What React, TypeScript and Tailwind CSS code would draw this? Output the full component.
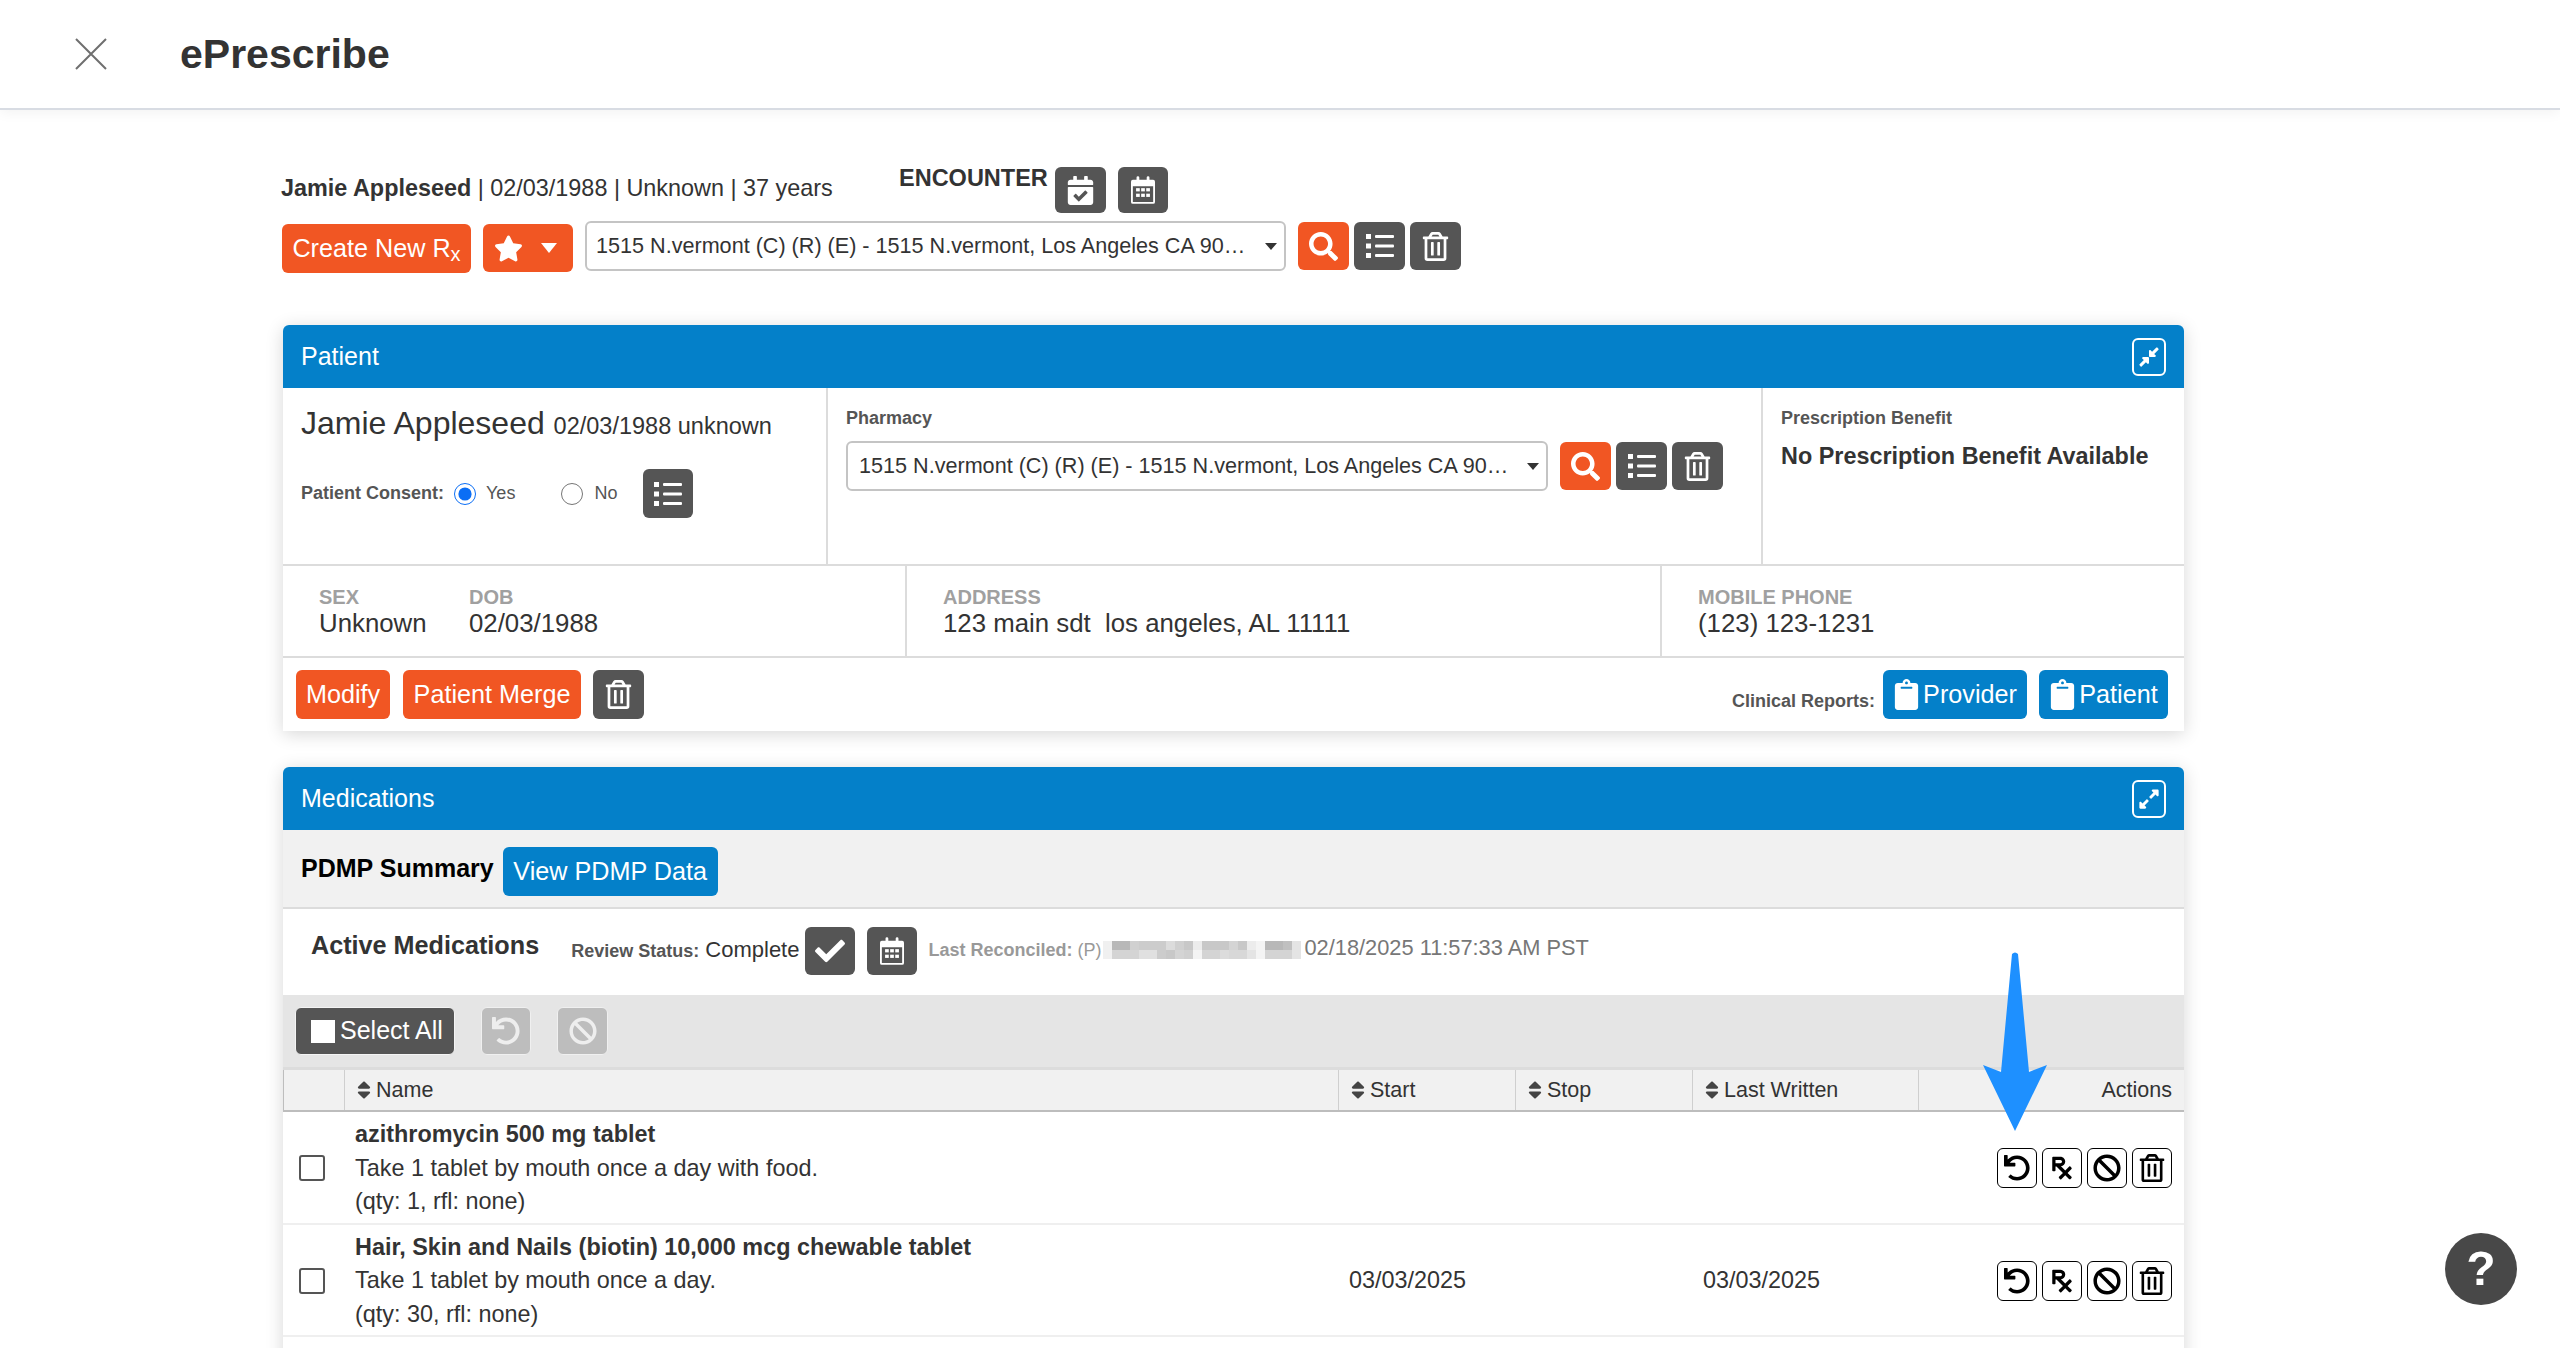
import { ReactNode } from "react";
import {
  FaBan,
  FaCalendarCheck,
  FaCheck,
  FaClipboard,
  FaCompressAlt,
  FaExpandAlt,
  FaPrescription,
  FaRegTrashAlt,
  FaSearch,
  FaSort,
  FaStar,
  FaUndo,
} from "react-icons/fa";

const pharmacy = "1515 N.vermont (C) (R) (E) - 1515 N.vermont, Los Angeles CA 90…";

const blurTop = ["#f0f0f0", "#b8b8b8", "#b8b8b8", "#d0d0d0", "#cccccc", "#cccccc", "#cccccc", "#dcdcdc", "#d0d0d0", "#c8c8c8", "#ececec", "#c8c8c8", "#c8c8c8", "#c8c8c8", "#d4d4d4", "#c8c8c8", "#ececec", "#f4f4f4", "#b8b8b8", "#b8b8b8", "#c0c0c0", "#e4e4e4"];
const blurBottom = ["#f0f0f0", "#d4d4d4", "#d4d4d4", "#d4d4d4", "#e0e0e0", "#e0e0e0", "#cccccc", "#c8c8c8", "#d4d4d4", "#d0d0d0", "#f4f4f4", "#d4d4d4", "#d4d4d4", "#dcdcdc", "#d8d8d8", "#d8d8d8", "#e4e4e4", "#f4f4f4", "#d4d4d4", "#d4d4d4", "#d4d4d4", "#e4e4e4"];

const meds = [
  { name: "azithromycin 500 mg tablet", sig: "Take 1 tablet by mouth once a day with food.", qty: "(qty: 1, rfl: none)", start: "", written: "" },
  { name: "Hair, Skin and Nails (biotin) 10,000 mcg chewable tablet", sig: "Take 1 tablet by mouth once a day.", qty: "(qty: 30, rfl: none)", start: "03/03/2025", written: "03/03/2025" },
];

function ListIcon({ size = 28 }: { size?: number }) {
  return (
    <svg width={size} height={size} viewBox="0 0 28 28" fill="white">
      <rect x="0" y="2" width="5" height="5" />
      <rect x="0" y="11.5" width="5" height="5" />
      <rect x="0" y="21" width="5" height="5" />
      <rect x="9" y="3" width="19" height="3" rx="1" />
      <rect x="9" y="12.5" width="19" height="3" rx="1" />
      <rect x="9" y="22" width="19" height="3" rx="1" />
    </svg>
  );
}

function CalendarIcon() {
  return (
    <svg width="24" height="28" viewBox="0 0 26 30" fill="white">
      <path d="M2 4h4V1.5a1.5 1.5 0 0 1 3 0V4h8V1.5a1.5 1.5 0 0 1 3 0V4h4a2 2 0 0 1 2 2v22a2 2 0 0 1-2 2H2a2 2 0 0 1-2-2V6a2 2 0 0 1 2-2zm0 7v17h22V11H2z" fillRule="evenodd" />
      <rect x="5.5" y="13" width="4" height="3.5" />
      <rect x="11" y="13" width="4" height="3.5" />
      <rect x="16.5" y="13" width="4" height="3.5" />
      <rect x="5.5" y="19" width="4" height="3.5" />
      <rect x="11" y="19" width="4" height="3.5" />
      <rect x="16.5" y="19" width="4" height="3.5" />
    </svg>
  );
}

function IconBtn({ children, className }: { children: ReactNode; className: string }) {
  return (
    <button className={`flex h-[48px] w-[51px] shrink-0 items-center justify-center rounded-[6px] text-white ${className}`}>
      {children}
    </button>
  );
}

function TextBtn({ children, className }: { children: ReactNode; className: string }) {
  return (
    <button className={`flex h-[49px] shrink-0 items-center justify-center rounded-[6px] text-[25.2px] leading-none text-white ${className}`}>
      {children}
    </button>
  );
}

function SelectBox({ className }: { className: string }) {
  return (
    <div className={`flex h-[50px] shrink-0 items-center justify-between rounded-[6px] border-2 border-[#c4c4c4] bg-white pr-[7px] ${className}`}>
      <span className="text-[21.6px] whitespace-nowrap text-[#333]">{pharmacy}</span>
      <span className="h-0 w-0 border-x-[6.5px] border-t-[7px] border-x-transparent border-t-[#333]" />
    </div>
  );
}

function Panel({ title, icon, children }: { title: string; icon: ReactNode; children: ReactNode }) {
  return (
    <section className="w-[1901px] rounded-t-[6px] bg-white shadow-[0_3px_18px_rgba(0,0,0,0.16)]">
      <div className="flex h-[63px] items-center justify-between rounded-t-[6px] bg-[#0480c9] pr-[18px] pl-[18px]">
        <h2 className="pb-[1px] text-[25px] leading-none text-white">{title}</h2>
        <span className="flex h-[38px] w-[34px] items-center justify-center rounded-[6px] border-2 border-white text-white">
          {icon}
        </span>
      </div>
      {children}
    </section>
  );
}

function Field({ label, value, className }: { label: string; value: string; className?: string }) {
  return (
    <div className={className}>
      <div className="text-[20px] leading-[22px] font-bold text-[#a0a0a0]">{label}</div>
      <div className="text-[25.8px] leading-[30px] text-[#333]">{value}</div>
    </div>
  );
}

function ActionBtn({ children }: { children: ReactNode }) {
  return (
    <button className="flex h-[40px] w-[40px] items-center justify-center rounded-[6px] border border-black bg-white text-black">
      {children}
    </button>
  );
}

function HeadCell({ label, className }: { label: string; className: string }) {
  return (
    <div className={`flex items-center gap-[1px] border-r border-[#cfcfcf] pl-[8px] ${className}`}>
      <FaSort className="text-[22px] text-[#444]" />
      <span>{label}</span>
    </div>
  );
}

export default function App() {
  return (
    <div className="relative h-[1348px] w-full overflow-hidden bg-white font-['Liberation_Sans',Arial,sans-serif]">
      <header className="flex h-[110px] items-center border-b-2 border-[#d8dce3] pl-[74px] shadow-[0_3px_12px_rgba(0,0,0,0.05)]">
        <svg width="34" height="34" viewBox="0 0 34 34" stroke="#6f6f6f" strokeWidth="2" fill="none">
          <path d="M2 2l30 30M32 2L2 32" />
        </svg>
        <h1 className="ml-[72px] text-[41px] leading-none font-bold text-[#333]">ePrescribe</h1>
      </header>

      <main className="pl-[281px]">
        <div className="mt-[57px] flex h-[46px] items-start">
          <p className="mt-[6px] w-[618px] text-[23.4px] leading-[30px] text-[#333]">
            <b>Jamie Appleseed</b> | 02/03/1988 | Unknown | 37 years
          </p>
          <b className="mt-[-4px] text-[23.5px] leading-[30px] text-[#333]">ENCOUNTER</b>
          <button className="ml-[7px] flex h-[46px] w-[51px] items-center justify-center rounded-[6px] bg-[#555] text-[29px] text-white">
            <FaCalendarCheck />
          </button>
          <button className="ml-[12px] flex h-[46px] w-[50px] items-center justify-center rounded-[6px] bg-[#555]">
            <CalendarIcon />
          </button>
        </div>

        <div className="mt-[8px] flex items-start pl-[1px]">
          <TextBtn className="mt-[3px] h-[48px] w-[189px] bg-[#f15623]">
            Create New R<sub className="top-[5px] text-[20px]">x</sub>
          </TextBtn>
          <button className="mt-[3px] ml-[12px] flex h-[48px] w-[90px] items-center justify-center gap-[18px] rounded-[6px] bg-[#f15623] pr-[5px] text-white">
            <FaStar className="text-[29px]" />
            <span className="h-0 w-0 border-x-[8px] border-t-[10px] border-x-transparent border-t-white" />
          </button>
          <SelectBox className="ml-[12px] w-[701px] pl-[9px]" />
          <IconBtn className="mt-[1px] ml-[12px] bg-[#f15623]">
            <FaSearch className="text-[29px]" />
          </IconBtn>
          <IconBtn className="mt-[1px] ml-[5px] bg-[#555]">
            <ListIcon />
          </IconBtn>
          <IconBtn className="mt-[1px] ml-[5px] bg-[#555]">
            <FaRegTrashAlt className="text-[29px]" />
          </IconBtn>
        </div>

        <div className="mt-[52px] ml-[2px]">
          <Panel title="Patient" icon={<FaCompressAlt className="text-[22px]" />}>
            <div className="flex h-[178px] border-b-2 border-[#dcdcdc]">
              <div className="w-[545px] border-r-2 border-[#dcdcdc] pt-[17px] pl-[18px]">
                <p className="text-[32px] leading-[36px] whitespace-nowrap text-[#333]">
                  Jamie Appleseed <span className="text-[23.5px]">02/03/1988 unknown</span>
                </p>
                <div className="mt-[25px] flex items-center text-[18px] text-[#555]">
                  <b>Patient Consent:</b>
                  <input type="radio" checked readOnly className="ml-[10px] h-[22px] w-[22px] accent-[#0b6ef5]" />
                  <span className="ml-[10px]">Yes</span>
                  <input type="radio" readOnly checked={false} className="ml-[46px] h-[22px] w-[22px]" />
                  <span className="ml-[11px]">No</span>
                  <button className="ml-[26px] flex h-[49px] w-[50px] items-center justify-center rounded-[6px] bg-[#555]">
                    <ListIcon />
                  </button>
                </div>
              </div>
              <div className="w-[935px] border-r-2 border-[#dcdcdc] pt-[20px] pl-[18px]">
                <b className="block text-[18px] leading-[20px] text-[#555]">Pharmacy</b>
                <div className="mt-[13px] flex items-start">
                  <SelectBox className="w-[702px] pl-[11px]" />
                  <IconBtn className="mt-[1px] ml-[12px] bg-[#f15623]">
                    <FaSearch className="text-[29px]" />
                  </IconBtn>
                  <IconBtn className="mt-[1px] ml-[5px] bg-[#555]">
                    <ListIcon />
                  </IconBtn>
                  <IconBtn className="mt-[1px] ml-[5px] bg-[#555]">
                    <FaRegTrashAlt className="text-[29px]" />
                  </IconBtn>
                </div>
              </div>
              <div className="flex-1 pt-[20px] pl-[18px]">
                <b className="block text-[18px] leading-[20px] text-[#555]">Prescription Benefit</b>
                <b className="mt-[13px] block text-[23.4px] leading-[30px] text-[#333]">No Prescription Benefit Available</b>
              </div>
            </div>

            <div className="flex h-[92px] border-b-2 border-[#dcdcdc]">
              <div className="flex w-[624px] border-r-2 border-[#dcdcdc] pt-[20px] pl-[36px]">
                <Field label="SEX" value="Unknown" className="w-[150px]" />
                <Field label="DOB" value="02/03/1988" />
              </div>
              <Field label="ADDRESS" value="123 main sdt  los angeles, AL 11111" className="w-[755px] border-r-2 border-[#dcdcdc] pt-[20px] pl-[36px] whitespace-pre" />
              <Field label="MOBILE PHONE" value="(123) 123-1231" className="flex-1 pt-[20px] pl-[36px]" />
            </div>

            <div className="flex h-[73px] items-start pt-[12px] pr-[16px] pl-[13px]">
              <TextBtn className="w-[94px] bg-[#f15623]">Modify</TextBtn>
              <TextBtn className="ml-[13px] w-[178px] bg-[#f15623]">Patient Merge</TextBtn>
              <button className="ml-[12px] flex h-[49px] w-[51px] items-center justify-center rounded-[6px] bg-[#555] text-white">
                <FaRegTrashAlt className="text-[29px]" />
              </button>
              <b className="mt-[21px] ml-auto text-[18px] leading-[20px] text-[#555]">Clinical Reports:</b>
              <TextBtn className="ml-[8px] w-[144px] gap-[1px] bg-[#0480c9] pr-[2px]">
                <FaClipboard className="text-[31px]" />
                Provider
              </TextBtn>
              <TextBtn className="ml-[12px] w-[129px] gap-[1px] bg-[#0480c9] pr-[2px]">
                <FaClipboard className="text-[31px]" />
                Patient
              </TextBtn>
            </div>
          </Panel>

          <div className="mt-[36px]">
            <Panel title="Medications" icon={<FaExpandAlt className="text-[22px]" />}>
              <div className="flex h-[79px] items-start border-b-2 border-[#dcdcdc] bg-[#f1f1f1] pt-[17px] pl-[18px]">
                <b className="mt-[7px] text-[25px] leading-[28px] text-black">PDMP Summary</b>
                <TextBtn className="ml-[9px] w-[215px] bg-[#0480c9]">View PDMP Data</TextBtn>
              </div>

              <div className="flex h-[86px] items-start pt-[18px]">
                <b className="mt-[3px] ml-[28px] text-[25.2px] leading-[30px] text-[#333]">Active Medications</b>
                <p className="mt-[10px] ml-[32px] text-[22px] leading-[26px] text-[#333]">
                  <b className="text-[18px] text-[#555]">Review Status:</b> Complete
                </p>
                <button className="ml-[6px] flex h-[48px] w-[50px] items-center justify-center rounded-[6px] bg-[#555] text-[30px] text-white">
                  <FaCheck />
                </button>
                <button className="ml-[12px] flex h-[48px] w-[50px] items-center justify-center rounded-[6px] bg-[#555]">
                  <CalendarIcon />
                </button>
                <p className="mt-[11px] ml-[11px] w-[175px] text-[18px] leading-[24px] whitespace-nowrap text-[#999]">
                  <b>Last Reconciled:</b> (P)
                </p>
                <div className="mt-[14px] mr-[3px] flex flex-col">
                  {[blurTop, blurBottom].map((row, r) => (
                    <div key={r} className="flex h-[9px]">
                      {row.map((c, i) => (
                        <span key={i} className="h-[9px] w-[9px]" style={{ backgroundColor: c }} />
                      ))}
                    </div>
                  ))}
                </div>
                <span className="mt-[8px] text-[21.8px] leading-[26px] text-[#777]">02/18/2025 11:57:33 AM PST</span>
              </div>

              <div className="flex h-[75px] items-start border-b-[3px] border-[#dcdcdc] bg-[#e5e5e5] pt-[12px] pl-[12px]">
                <button className="flex h-[48px] w-[160px] items-center gap-[5px] rounded-[6px] border border-[#f4f4f4] bg-[#555] pl-[15px] text-[25px] text-white">
                  <span className="h-[23px] w-[24px] bg-white" />
                  Select All
                </button>
                <button className="ml-[26px] flex h-[48px] w-[50px] items-center justify-center rounded-[6px] border border-[#f0f0f0] bg-[#bdbdbd] text-[28px] text-[#eee]">
                  <FaUndo />
                </button>
                <button className="ml-[26px] flex h-[48px] w-[51px] items-center justify-center rounded-[6px] border border-[#f0f0f0] bg-[#bdbdbd] text-[28px] text-[#eee]">
                  <FaBan />
                </button>
              </div>

              <div className="flex h-[42px] border-b-2 border-l border-[#bdbdbd] bg-[#f1f1f1] text-[21.5px] text-[#333]">
                <div className="w-[61px] border-r border-[#cfcfcf]" />
                <HeadCell label="Name" className="w-[994px]" />
                <HeadCell label="Start" className="w-[177px]" />
                <HeadCell label="Stop" className="w-[177px]" />
                <HeadCell label="Last Written" className="w-[226px]" />
                <div className="flex flex-1 items-center justify-end pr-[12px]">Actions</div>
              </div>

              {meds.map((m) => (
                <div key={m.name} className="flex h-[112.5px] items-center border-b-2 border-[#efefef] pt-[2px] text-[23.4px] text-[#333]">
                  <div className="flex w-[72px] justify-start pl-[16px]">
                    <span className="h-[26px] w-[26px] rounded-[3px] border-2 border-[#555]" />
                  </div>
                  <div className="w-[994px] leading-[33.5px]">
                    <b className="block">{m.name}</b>
                    <div>{m.sig}</div>
                    <div>{m.qty}</div>
                  </div>
                  <div className="w-[354px]">{m.start}</div>
                  <div className="w-[294px]">{m.written}</div>
                  <div className="flex gap-[5px]">
                    <ActionBtn><FaUndo className="text-[26px]" /></ActionBtn>
                    <ActionBtn><FaPrescription className="text-[26px]" /></ActionBtn>
                    <ActionBtn><FaBan className="text-[28px]" /></ActionBtn>
                    <ActionBtn><FaRegTrashAlt className="text-[28px]" /></ActionBtn>
                  </div>
                </div>
              ))}
              <div className="h-[60px]" />
            </Panel>
          </div>
        </div>
      </main>

      {/* arrow sits over the table, pointing at the refill button */}
      <svg className="absolute top-[952px] left-[1983px]" width="64" height="180" viewBox="0 0 64 180">
        <path d="M29 2 Q32 -1 35 2 L46 120 L64 113 L32 179 L0 113 L18 120 Z" fill="#1e90ff" />
      </svg>

      <button className="fixed top-[1233px] left-[2445px] flex h-[72px] w-[72px] items-center justify-center rounded-full bg-[#484848] text-[48px] font-bold text-white">
        ?
      </button>
    </div>
  );
}
